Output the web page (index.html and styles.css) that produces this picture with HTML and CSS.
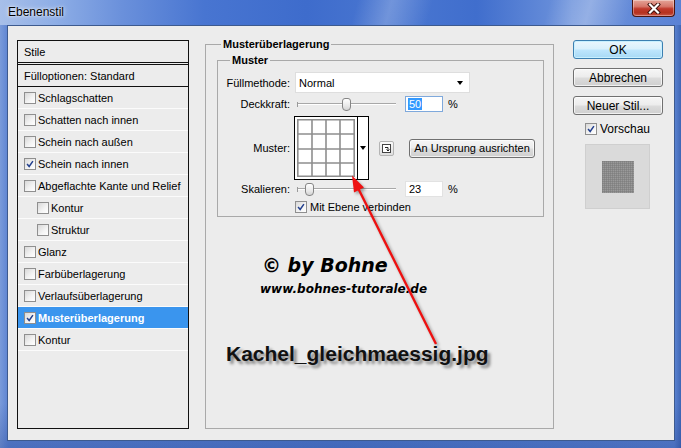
FILE: index.html
```html
<!DOCTYPE html>
<html lang="de">
<head>
<meta charset="utf-8">
<title>Ebenenstil</title>
<link rel="stylesheet" href="styles.css">
</head>
<body>
<div class="window">
  <div class="titlebar">
    <span class="title">Ebenenstil</span>
    <div class="close">
      <svg width="16" height="11" viewBox="0 0 16 11"><path d="M4 1.5 L12 9.5 M12 1.5 L4 9.5" stroke="#3a0e0a" stroke-width="4" stroke-linecap="square"/><path d="M4 1.5 L12 9.5 M12 1.5 L4 9.5" stroke="#fff" stroke-width="2.2" stroke-linecap="square"/></svg>
    </div>
  </div>
  <div class="client">
    <div class="styles-list">
      <div class="li head">Stile</div>
      <div class="li head2">Fülloptionen: Standard</div>
      <div class="li"><span class="cb"></span>Schlagschatten</div>
      <div class="li"><span class="cb"></span>Schatten nach innen</div>
      <div class="li"><span class="cb"></span>Schein nach außen</div>
      <div class="li"><span class="cb"><svg viewBox="0 0 12 12"><path d="M2.5 6 L5 9 L9.5 2.5" fill="none" stroke="#23408e" stroke-width="1.8"/></svg></span>Schein nach innen</div>
      <div class="li"><span class="cb"></span>Abgeflachte Kante und Relief</div>
      <div class="li sub"><span class="cb"></span>Kontur</div>
      <div class="li sub"><span class="cb"></span>Struktur</div>
      <div class="li"><span class="cb"></span>Glanz</div>
      <div class="li"><span class="cb"></span>Farbüberlagerung</div>
      <div class="li"><span class="cb"></span>Verlaufsüberlagerung</div>
      <div class="li sel"><span class="cb"><svg viewBox="0 0 12 12"><path d="M2.5 6 L5 9 L9.5 2.5" fill="none" stroke="#23408e" stroke-width="1.8"/></svg></span>Musterüberlagerung</div>
      <div class="li"><span class="cb"></span>Kontur</div>
    </div>

    <fieldset class="group outer">
      <legend>Musterüberlagerung</legend>
      <fieldset class="group inner">
        <legend>Muster</legend>
        <div class="row r-select">
          <span class="lbl">Füllmethode:</span>
          <div class="select"><span>Normal</span><span class="tri"></span></div>
        </div>
        <div class="row r-slider">
          <span class="lbl">Deckkraft:</span>
          <div class="slider"><span class="thumb t50"></span></div>
          <div class="num focus"><span class="hl">50</span></div>
          <span class="pct">%</span>
        </div>
        <div class="row r-swatch">
          <span class="lbl">Muster:</span>
          <div class="swatch">
            <svg class="pattern" width="58" height="58" viewBox="0 0 58 58">
              <rect x="0" y="0" width="58" height="58" fill="#fff"/>
              <g stroke="#8e8e8e" stroke-width="1.6">
                <line x1="0.8" y1="0" x2="0.8" y2="58"/>
                <line x1="15" y1="0" x2="15" y2="58"/>
                <line x1="29" y1="0" x2="29" y2="58"/>
                <line x1="43" y1="0" x2="43" y2="58"/>
                <line x1="57.2" y1="0" x2="57.2" y2="58"/>
                <line x1="0" y1="0.8" x2="58" y2="0.8"/>
                <line x1="0" y1="15" x2="58" y2="15"/>
                <line x1="0" y1="30" x2="58" y2="30"/>
                <line x1="0" y1="44" x2="58" y2="44"/>
                <line x1="0" y1="57.2" x2="58" y2="57.2"/>
              </g>
            </svg>
            <div class="sw-arrow"><span class="tri"></span></div>
          </div>
          <div class="iconbtn">
            <svg width="9" height="9" viewBox="0 0 9 9"><rect x="0.5" y="0.5" width="8" height="8" fill="#fff" stroke="#444"/><path d="M3 3.5 H6 V7 M4.5 5.5 L6 7 L7.5 5.5" fill="none" stroke="#222" stroke-width="1"/></svg>
          </div>
          <div class="btn origin">An Ursprung ausrichten</div>
        </div>
        <div class="row r-slider r-scale">
          <span class="lbl">Skalieren:</span>
          <div class="slider"><span class="thumb t23"></span></div>
          <div class="num">23</div>
          <span class="pct">%</span>
        </div>
        <div class="row r-check">
          <span class="cb"><svg viewBox="0 0 12 12"><path d="M2.5 6 L5 9 L9.5 2.5" fill="none" stroke="#23408e" stroke-width="1.8"/></svg></span>
          <span class="cb-text">Mit Ebene verbinden</span>
        </div>
      </fieldset>
      <div class="wm-copy">© by Bohne</div>
      <div class="wm-url">www.bohnes-tutorale.de</div>
      <div class="filename">Kachel_gleichmaessig.jpg</div>
    </fieldset>

    <div class="side">
      <div class="btn big default">OK</div>
      <div class="btn big">Abbrechen</div>
      <div class="btn big">Neuer Stil...</div>
      <div class="preview-check">
        <span class="cb"><svg viewBox="0 0 12 12"><path d="M2.5 6 L5 9 L9.5 2.5" fill="none" stroke="#23408e" stroke-width="1.8"/></svg></span>
        <span class="cb-text">Vorschau</span>
      </div>
      <div class="preview"><div class="preview-sq"></div></div>
    </div>

    <svg class="arrow" width="660" height="400" viewBox="0 0 660 400">
      <line x1="428" y1="318" x2="350.5" y2="163" stroke="#ee1111" stroke-width="2.4"/>
      <polygon points="344,149.5 356,161.5 346,166.5" fill="#ee1111"/>
    </svg>
  </div>
</div>
</body>
</html>
```

FILE: styles.css
```css
* { box-sizing: border-box; }

html, body {
  margin: 0;
  padding: 0;
}

body {
  width: 681px;
  height: 448px;
  overflow: hidden;
  font-family: "Liberation Sans", Arial, sans-serif;
  font-size: 11px;
  color: #000;
}

.window {
  width: 681px;
  height: 448px;
  display: flex;
  flex-direction: column;
  background:
    linear-gradient(180deg, rgba(255,255,255,0) 0%, rgba(255,255,255,0) 90%, rgba(40,70,150,0.35) 100%),
    linear-gradient(90deg, #7a9bda 0%, #5d84d2 1.2%, #4f7acd 50%, #5b84d3 99%, #3f66b5 100%);
}

.titlebar {
  height: 25px;
  flex: none;
  display: flex;
  justify-content: space-between;
  align-items: flex-start;
  padding: 0 6px 0 8px;
  background:
    linear-gradient(105deg, transparent 52%, rgba(255,255,255,0.22) 57%, transparent 63%, transparent 80%, rgba(255,255,255,0.28) 86%, transparent 92%),
    linear-gradient(90deg, #a7bfe9 0%, #8eaee6 8%, #6a90db 18%, #4875d1 30%, #3e6ccc 45%, #4a77d1 58%, #406ecd 70%, #6f94dc 84%, #5a82d5 100%);
}

.title {
  margin-top: 5px;
  font-size: 12px;
  line-height: 15px;
  color: #000;
  text-shadow: 0 0 5px rgba(255,255,255,0.9), 0 0 2px rgba(255,255,255,0.8);
}

.close {
  width: 43px;
  height: 17px;
  border: 1px solid #4a1510;
  border-top: none;
  border-radius: 0 0 4px 4px;
  background: linear-gradient(180deg, #e4a497 0%, #d6776a 40%, #c0392b 55%, #b5321f 80%, #c9574a 100%);
  box-shadow: inset 0 0 0 1px rgba(255,255,255,0.35);
  display: flex;
  align-items: center;
  justify-content: center;
}

.client {
  position: relative;
  flex: none;
  width: 668px;
  height: 416px;
  margin-left: 7px;
  background: #ececec;
  border: 1px solid #3d5a8e;
  display: flex;
  align-items: flex-start;
}

/* ---------- left styles list ---------- */
.styles-list {
  width: 172px;
  height: 389px;
  margin: 14px 0 0 9px;
  border: 1px solid #111;
  background: #ececec;
  display: flex;
  flex-direction: column;
}

.li {
  height: 22px;
  flex: none;
  display: flex;
  align-items: center;
  padding-left: 6px;
  border-bottom: 1px solid #fbfbfb;
  white-space: nowrap;
}

.li.head {
  height: 22px;
  border-bottom: 1px solid #111;
}

.li.head2 {
  height: 23px;
  margin-top: 1px;
  border-top: 1px solid #111;
  border-bottom: 1px solid #111;
}

.li.sub {
  padding-left: 19px;
}

.li.sel {
  background: #3a95ee;
  color: #fff;
  font-weight: bold;
}

.cb {
  width: 12px;
  height: 12px;
  flex: none;
  border: 1px solid #8f8f8f;
  background: linear-gradient(135deg, #d8d8d8 0%, #f4f4f4 60%, #ffffff 100%);
  margin-right: 3px;
  display: inline-flex;
}

.li .cb {
  margin-right: 2px;
}

.cb svg {
  width: 10px;
  height: 10px;
}

/* ---------- group boxes ---------- */
.group {
  margin: 0;
  padding: 0;
  min-width: 0;
  border: 1px solid #a9a9a9;
}

.group legend {
  padding: 0 2px;
  font-weight: bold;
  line-height: 13px;
}

.outer {
  width: 349px;
  height: 391px;
  margin: 12px 0 0 16px;
  display: flex;
  flex-direction: column;
}

.outer > legend {
  margin-left: 15px;
}

.inner {
  width: 327px;
  height: 163px;
  margin: 3px 0 0 11px;
}

.inner > legend {
  margin-left: 12px;
}

.row {
  display: flex;
  align-items: center;
  white-space: nowrap;
}

.lbl {
  width: 72px;
  text-align: right;
  flex: none;
}

.r-select {
  margin-top: 5px;
  height: 21px;
}

.select {
  margin-left: 5px;
  width: 175px;
  height: 21px;
  background: #fff;
  border: 1px solid #dedede;
  display: flex;
  align-items: center;
  justify-content: space-between;
  padding: 0 6px 0 3px;
}

.tri {
  width: 0;
  height: 0;
  border-left: 3.5px solid transparent;
  border-right: 3.5px solid transparent;
  border-top: 4px solid #000;
}

.r-slider {
  margin-top: 3px;
  height: 16px;
}

.r-scale {
  margin-top: 1px;
}

.slider {
  margin-left: 7px;
  width: 99px;
  height: 14px;
  display: flex;
  align-items: center;
  background:
    linear-gradient(90deg, #9a9a9a 0, #9a9a9a 1px, transparent 1px) left center / 1px 5px no-repeat,
    linear-gradient(180deg, transparent 6px, #a8a8a8 6px, #a8a8a8 7px, #fff 7px, #fff 8px, transparent 8px);
}

.thumb {
  width: 9px;
  height: 13px;
  border: 1px solid #858585;
  border-radius: 3px 3px 4px 4px;
  background: linear-gradient(180deg, #ffffff 0%, #e9e9e9 60%, #d4d4d4 100%);
}

.t50 { margin-left: 45px; }
.t23 { margin-left: 8px; }

.num {
  margin-left: 9px;
  width: 38px;
  height: 16px;
  background: #fff;
  border: 1px solid #e2e2e2;
  display: flex;
  align-items: center;
  padding-left: 3px;
}

.num.focus {
  border-color: #7fa9dc;
  padding-left: 2px;
}

.hl {
  background: #3399ff;
  color: #fff;
  padding: 0 1px;
  line-height: 12px;
}

.pct {
  margin-left: 5px;
}

.r-swatch {
  margin-top: 4px;
  height: 64px;
}

.swatch {
  margin-left: 4px;
  width: 75px;
  height: 64px;
  border: 1px solid #000;
  display: flex;
  background: #fff;
}

.pattern {
  margin: 2px 0 0 2px;
  flex: none;
}

.sw-arrow {
  margin-left: 2px;
  width: 12px;
  border-left: 1px solid #000;
  display: flex;
  align-items: center;
  justify-content: center;
}

.iconbtn {
  margin-left: 10px;
  width: 15px;
  height: 15px;
  border: 1px solid #b4b4b4;
  border-radius: 2px;
  background: linear-gradient(180deg, #fafafa, #dedede);
  display: flex;
  align-items: center;
  justify-content: center;
}

.btn {
  height: 19px;
  border: 1px solid #707070;
  border-radius: 3px;
  background: linear-gradient(180deg, #f6f6f6 0%, #ececec 48%, #dcdcdc 52%, #cfcfcf 100%);
  box-shadow: inset 0 0 0 1px rgba(255,255,255,0.7);
  display: flex;
  align-items: center;
  justify-content: center;
  white-space: nowrap;
}

.origin {
  margin-left: 15px;
  width: 126px;
}

.r-check {
  margin-top: 3px;
  height: 13px;
  padding-left: 77px;
}

.cb-text {
  margin-left: 0;
}

/* ---------- watermark ---------- */
.wm-copy {
  margin: 37px 0 0 56px;
  font-family: "DejaVu Sans", sans-serif;
  font-weight: bold;
  font-style: italic;
  font-size: 19px;
  line-height: 22px;
}

.wm-url {
  margin: 6px 0 0 54px;
  font-family: "DejaVu Sans", sans-serif;
  font-weight: bold;
  font-style: italic;
  font-size: 12px;
  line-height: 14px;
}

.filename {
  margin: 46px 0 0 20px;
  font-family: "Liberation Sans", Arial, sans-serif;
  font-weight: bold;
  font-size: 21px;
  line-height: 24px;
  color: #111;
  text-shadow: 3px 3px 3px rgba(0,0,0,0.45);
}

/* ---------- right side ---------- */
.side {
  width: 90px;
  margin: 14px 0 0 19px;
  display: flex;
  flex-direction: column;
}

.btn.big {
  font-size: 12px;
  margin-bottom: 9px;
}

.btn.default {
  border-color: #3c7fb1;
  background: linear-gradient(180deg, #eaf6fd 0%, #d9f0fc 48%, #bee6fd 52%, #a7d9f5 100%);
  box-shadow: inset 0 0 0 1px #c8f0ff;
}

.preview-check {
  margin: -1px 0 0 12px;
  height: 12px;
  display: flex;
  align-items: center;
  font-size: 12px;
}

.preview {
  margin: 9px 0 0 12px;
  width: 65px;
  height: 65px;
  background: #dadada;
  border: 1px solid #cfcfcf;
  display: flex;
  align-items: center;
  justify-content: center;
}

.preview-sq {
  width: 32px;
  height: 32px;
  background-color: #9a9a9a;
  background-image:
    linear-gradient(90deg, rgba(120,120,120,0.5) 1px, transparent 1px),
    linear-gradient(180deg, rgba(120,120,120,0.5) 1px, transparent 1px);
  background-size: 2px 2px;
}

/* ---------- red arrow overlay ---------- */
.arrow {
  position: absolute;
  left: 0;
  top: 0;
  pointer-events: none;
  filter: drop-shadow(2px 2px 1.5px rgba(0,0,0,0.35));
}
```
